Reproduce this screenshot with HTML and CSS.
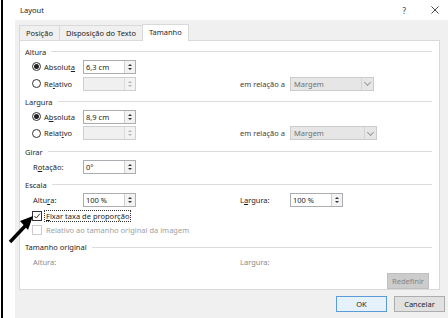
FILE: index.html
```html
<!DOCTYPE html>
<html lang="pt">
<head>
    <meta charset="UTF-8">
    <title>Layout</title>
    <link rel="stylesheet" href="styles.css">
</head>
<body>
    <div class="window">
        <div class="titlebar">
            <span class="title">Layout</span>
            <span class="help">?</span>
            <svg class="close" viewBox="0 0 9 9"><path d="M0.5 0.5L8.5 8.5M8.5 0.5L0.5 8.5" stroke="#333" stroke-width="1" fill="none"/></svg>
        </div>

        <div class="body">
            <div class="tabs">
                <div class="tab">Posição</div>
                <div class="tab">Disposição do Texto</div>
                <div class="tab active">Tamanho</div>
            </div>

            <div class="panel">
                <div class="group"><span>Altura</span></div>
                <div class="row">
                    <div class="opt"><span class="radio checked"></span>Absolut<u>a</u></div>
                    <div class="spin"><span class="val">6,3 cm</span><span class="arrows"><i class="up"></i><i class="down"></i></span></div>
                </div>
                <div class="row">
                    <div class="opt"><span class="radio"></span>Re<u>l</u>ativo</div>
                    <div class="spin disabled"><span class="val"></span><span class="arrows"><i class="up"></i><i class="down"></i></span></div>
                    <div class="gap"></div>
                    <div class="lbl2 muted">em relação a</div>
                    <div class="combo"><span>Margem</span><span class="drop"></span></div>
                </div>

                <div class="group"><span>Largura</span></div>
                <div class="row">
                    <div class="opt"><span class="radio checked"></span>A<u>b</u>soluta</div>
                    <div class="spin"><span class="val">8,9 cm</span><span class="arrows"><i class="up"></i><i class="down"></i></span></div>
                </div>
                <div class="row">
                    <div class="opt"><span class="radio"></span>Relat<u>i</u>vo</div>
                    <div class="spin disabled"><span class="val"></span><span class="arrows"><i class="up"></i><i class="down"></i></span></div>
                    <div class="gap"></div>
                    <div class="lbl2 muted">em relação a</div>
                    <div class="combo wide"><span>Margem</span><span class="drop"></span></div>
                </div>

                <div class="group"><span>Girar</span></div>
                <div class="row">
                    <div class="opt plain">R<u>o</u>tação:</div>
                    <div class="spin"><span class="val">0°</span><span class="arrows"><i class="up"></i><i class="down"></i></span></div>
                </div>

                <div class="group"><span>Escala</span></div>
                <div class="row">
                    <div class="opt plain">Altu<u>r</u>a:</div>
                    <div class="spin"><span class="val">100 %</span><span class="arrows"><i class="up"></i><i class="down"></i></span></div>
                    <div class="gap"></div>
                    <div class="lbl2">L<u>a</u>rgura:</div>
                    <div class="spin"><span class="val">100 %</span><span class="arrows"><i class="up"></i><i class="down"></i></span></div>
                </div>
                <div class="check-row">
                    <span class="check checked">
                        <svg viewBox="0 0 9 9"><path d="M1.5 4.5L3.7 6.8L7.8 1.8" stroke="#222" stroke-width="1" fill="none"/></svg>
                    </span>
                    <span class="focus"><u>F</u>ixar taxa de proporção</span>
                </div>
                <div class="check-row disabled">
                    <span class="check"></span>
                    <span class="label">Relativo ao tamanho original da imagem</span>
                </div>

                <div class="group"><span>Tamanho original</span></div>
                <div class="row info">
                    <div class="opt plain">Altura:</div>
                    <div class="spacer"></div>
                    <div class="gap"></div>
                    <div class="lbl2">Largura:</div>
                </div>
                <div class="reset-row">
                    <div class="btn disabled">Redefinir</div>
                </div>
            </div>

            <div class="buttons">
                <div class="btn primary">OK</div>
                <div class="btn">Cancelar</div>
            </div>
        </div>

        <svg class="pointer" viewBox="0 0 36 36">
            <path d="M4 34L21 16" stroke="#000" stroke-width="3.4" fill="none"/>
            <polygon points="27,8 14,13 22,22" fill="#000"/>
        </svg>
    </div>
</body>
</html>
```

FILE: styles.css
```css
* {
    margin: 0;
    padding: 0;
    box-sizing: border-box;
}

body {
    font-family: "Noto Sans", "DejaVu Sans", sans-serif;
    font-size: 7.5px;
    color: #1e1e1e;
    background: white;
}

u {
    text-decoration: underline;
    text-underline-offset: 1px;
}

.window {
    position: relative;
    width: 447px;
    height: 318px;
    margin-left: 1px;
    border-left: 2px solid #000;
    background: white;
    display: flex;
    flex-direction: column;
}

.titlebar {
    height: 20px;
    display: flex;
    align-items: center;
    padding-left: 17px;
}

.title {
    flex: 1;
}

.help {
    margin-right: 25px;
    color: #333;
    font-size: 8px;
}

.close {
    width: 8px;
    height: 8px;
    margin-right: 9px;
}

.body {
    flex: 1;
    margin-left: 12px;
    background: #f0f0f0;
    padding: 4px 8px 0 4px;
    display: flex;
    flex-direction: column;
}

.tabs {
    display: flex;
    height: 16px;
    align-items: flex-end;
}

.tab {
    height: 15px;
    line-height: 14px;
    padding: 0 6px;
    border: 1px solid #d9d9d9;
    border-bottom: none;
    border-right: none;
    background: #f0f0f0;
}

.tab.active {
    height: 17px;
    margin-bottom: -1px;
    background: white;
    border-right: 1px solid #d9d9d9;
    position: relative;
    z-index: 1;
    padding: 0 6px;
    line-height: 15px;
}

.panel {
    height: 250px;
    background: white;
    border: 1px solid #d9d9d9;
    padding: 4px 7px 0 5px;
    display: flex;
    flex-direction: column;
}

.group {
    height: 14px;
    display: flex;
    align-items: center;
    gap: 5px;
    margin-top: 3px;
}

.group:first-child {
    margin-top: 0;
}

.group::after {
    content: '';
    flex: 1;
    height: 1px;
    background: #dcdcdc;
}

.row {
    height: 17px;
    display: flex;
    align-items: center;
    padding-left: 7px;
}

.opt {
    width: 51px;
    display: flex;
    align-items: center;
}

.opt.plain {
    padding-left: 1px;
}

.radio {
    width: 9px;
    height: 9px;
    border: 1px solid #333;
    border-radius: 50%;
    margin-right: 3px;
    display: flex;
    align-items: center;
    justify-content: center;
}

.radio.checked::after {
    content: '';
    width: 5px;
    height: 5px;
    border-radius: 50%;
    background: #222;
}

.spin {
    width: 53px;
    height: 14px;
    border: 1px solid #abadb3;
    background: white;
    display: flex;
}

.spin .val {
    flex: 1;
    padding-left: 2px;
    line-height: 12px;
}

.arrows {
    width: 11px;
    border-left: 1px solid #d0d0d0;
    background: #f3f3f3;
    display: flex;
    flex-direction: column;
    align-items: center;
    justify-content: center;
    gap: 2px;
}

.arrows i {
    width: 0;
    height: 0;
    border-left: 2px solid transparent;
    border-right: 2px solid transparent;
}

.arrows .up {
    border-bottom: 2px solid #333;
}

.arrows .down {
    border-top: 2px solid #333;
}

.spin.disabled {
    background: #f0f0f0;
    border-color: #cfcfcf;
}

.spin.disabled .arrows {
    border-left-color: #dcdcdc;
}

.spin.disabled .up {
    border-bottom-color: #b5b5b5;
}

.spin.disabled .down {
    border-top-color: #b5b5b5;
}

.gap {
    width: 104px;
}

.spacer {
    width: 53px;
}

.lbl2 {
    width: 50px;
}

.muted {
    color: #444;
}

.combo {
    width: 84px;
    height: 14px;
    border: 1px solid #cccccc;
    background: #e6e6e6;
    color: #707070;
    display: flex;
    align-items: center;
    padding-left: 3px;
}

.combo.wide {
    width: 87px;
}

.combo span:first-child {
    flex: 1;
}

.drop {
    width: 12px;
    height: 12px;
    border-left: 1px solid #d4d4d4;
    display: flex;
    align-items: center;
    justify-content: center;
}

.drop::after {
    content: '';
    width: 4px;
    height: 4px;
    border-right: 1px solid #9a9a9a;
    border-bottom: 1px solid #9a9a9a;
    transform: translateY(-1px) rotate(45deg);
}

.check-row {
    height: 15px;
    display: flex;
    align-items: center;
    padding-left: 7px;
}

.check {
    width: 10px;
    height: 10px;
    border: 1px solid #333;
    background: white;
    margin-right: 2px;
    display: flex;
}

.check svg {
    width: 8px;
    height: 8px;
}

.focus {
    border: 1px dotted #333;
    padding: 0 1px;
    line-height: 10px;
}

.check-row.disabled {
    color: #a0a0a0;
}

.check-row.disabled .check {
    border-color: #cccccc;
}

.check-row.disabled .label {
    padding-left: 2px;
}

.info {
    color: #8a8a8a;
    height: 15px;
}

.reset-row {
    display: flex;
    justify-content: flex-end;
    padding-right: 3px;
    margin-top: 4px;
}

.btn {
    width: 51px;
    height: 16px;
    border: 1px solid #adadad;
    background: #e1e1e1;
    display: flex;
    align-items: center;
    justify-content: center;
}

.btn.disabled {
    width: 42px;
    border-color: #bfbfbf;
    background: #cccccc;
    color: #838383;
}

.btn.primary {
    border-color: #5a9bd8;
    background: #e5f1fb;
}

.buttons {
    display: flex;
    justify-content: flex-end;
    gap: 7px;
    margin-top: 6px;
    margin-right: -5px;
}

/* flecha de anotacion sobre el dialogo */
.pointer {
    position: absolute;
    left: 3px;
    top: 208px;
    width: 36px;
    height: 36px;
}
```
